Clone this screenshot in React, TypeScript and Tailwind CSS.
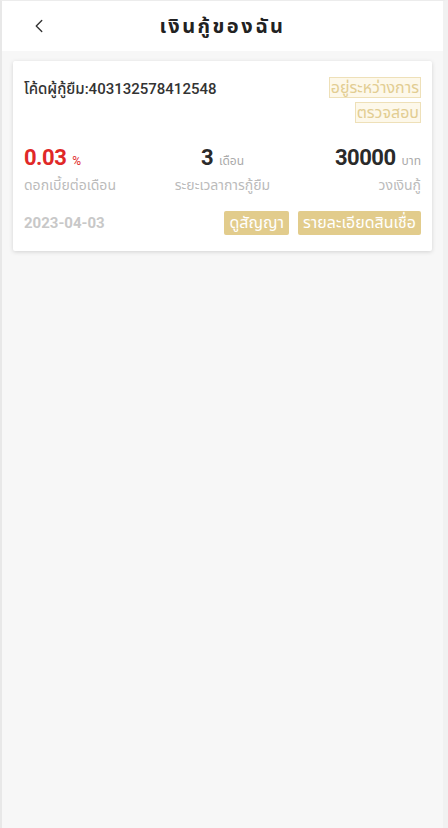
import { ChevronLeft } from "lucide-react";

type TStat = {
  value: string;
  unit: string;
  label: string;
  align: "left" | "center" | "right";
  red?: boolean;
};

const stats: TStat[] = [
  { value: "0.03", unit: "%", label: "ดอกเบี้ยต่อเดือน", align: "left", red: true },
  { value: "3", unit: "เดือน", label: "ระยะเวลาการกู้ยืม", align: "center" },
  { value: "30000", unit: "บาท", label: "วงเงินกู้", align: "right" },
];

const alignClass = {
  left: "items-start text-left",
  center: "items-center text-center",
  right: "items-end text-right",
};

export default function App() {
  return (
    <div
      className="min-h-[828px] bg-[#f7f7f7] border-l-2 border-r-[5px] border-t border-l-[#e8e8e8] border-r-[#f1f1f1] border-t-[#ececec] text-[#333]"
      style={{ fontFamily: 'Roboto, "Noto Sans Thai", "Noto Sans", sans-serif' }}
    >
      <header className="relative h-[50px] bg-white flex items-center justify-center">
        <button className="absolute left-[26px] top-[14px] text-[#333]">
          <ChevronLeft size={22} strokeWidth={1.5} />
        </button>
        <h1 className="text-[20px] font-bold tracking-[2.5px] text-[#222]">เงินกู้ของฉัน</h1>
      </header>

      <main className="pt-[10px] px-[11px]">
        <article className="bg-white rounded-[2px] shadow-[0_1px_4px_rgba(0,0,0,0.15)] px-[11px] pt-[16px] pb-[16px]">
          <div className="flex justify-between items-start">
            <p className="text-[15px] font-medium mt-[1px]">โค้ดผู้กู้ยืม:403132578412548</p>
            <div className="w-[100px] -mt-[2px] text-right leading-[25px]">
              <span className="text-[16px] text-[#e2cd92] bg-[#fdf8ea] border border-[#eee0b8] box-decoration-clone px-[1px]">
                อยู่ระหว่างการตรวจสอบ
              </span>
            </div>
          </div>

          <div className="grid grid-cols-3 mt-[18px]">
            {stats.map((s) => (
              <div key={s.label} className={`flex flex-col ${alignClass[s.align]}`}>
                <div className="flex items-baseline gap-[6px]">
                  <span
                    className={`text-[22px] font-bold tracking-[-0.5px] leading-[30px] ${s.red ? "text-[#e02828]" : "text-[#2a2a2a]"}`}
                  >
                    {s.value}
                  </span>
                  <span className={`text-[12px] ${s.red ? "text-[#e02828]" : "text-[#aaa]"}`}>{s.unit}</span>
                </div>
                <span className="text-[14px] text-[#bbb] mt-[2px]">{s.label}</span>
              </div>
            ))}
          </div>

          <div className="flex justify-between items-center mt-[15px]">
            <span className="text-[15px] font-bold text-[#c8c8c8]">2023-04-03</span>
            <div className="flex gap-[9px]">
              <button className="bg-[#e2cc8c] text-white text-[16px] leading-[24px] px-[5px] rounded-[2px]">
                ดูสัญญา
              </button>
              <button className="bg-[#e2cc8c] text-white text-[16px] leading-[24px] px-[5px] rounded-[2px]">
                รายละเอียดสินเชื่อ
              </button>
            </div>
          </div>
        </article>
      </main>
    </div>
  );
}
